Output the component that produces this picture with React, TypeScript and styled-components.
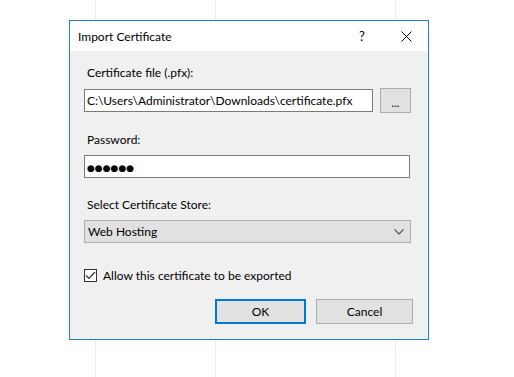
import React from "react";
import styled, { createGlobalStyle } from "styled-components";

const GlobalStyle = createGlobalStyle`
  html, body {
    margin: 0;
    padding: 0;
    background: #fff;
  }
  body {
    font-family: Lato, "Noto Sans", sans-serif;
    font-size: 12px;
    color: #000;
  }
`;

const Page = styled.div`
  width: 514px;
  height: 377px;
  box-sizing: border-box;
  padding: 20px 0 0 69px;
  background:
    linear-gradient(#e9eef5, #e9eef5) 95px 0 / 1px 100% no-repeat,
    linear-gradient(#e9eef5, #e9eef5) 215px 0 / 1px 100% no-repeat,
    linear-gradient(#e9eef5, #e9eef5) 395px 0 / 1px 100% no-repeat,
    #fff;
`;

const Dialog = styled.div`
  width: 360px;
  height: 320px;
  box-sizing: border-box;
  border: 1px solid #1c80d6;
  background: #f0f0f0;
  display: flex;
  flex-direction: column;
`;

const TitleBar = styled.div`
  height: 30px;
  background: #fff;
  display: flex;
  align-items: center;
  padding-left: 8px;
`;

const Title = styled.span`
  flex: 1;
  font-size: 12px;
  padding-top: 1px;
`;

const TitleButton = styled.span`
  width: 44px;
  height: 30px;
  display: flex;
  align-items: center;
  justify-content: center;
  font-size: 13px;
`;

const Body = styled.div`
  flex: 1;
  padding: 14px 17px 0 14px;
  display: flex;
  flex-direction: column;
`;

const Label = styled.div<{ $top?: number }>`
  margin-top: ${(p) => p.$top ?? 0}px;
  padding-left: 3px;
  height: 16px;
  line-height: 16px;
  margin-bottom: 7px;
`;

const Row = styled.div`
  display: flex;
  align-items: center;
  gap: 7px;
`;

const TextBox = styled.div<{ $width: number }>`
  width: ${(p) => p.$width}px;
  height: 23px;
  box-sizing: border-box;
  border: 1px solid #7a7a7a;
  background: #fff;
  padding: 0 2px;
  line-height: 21px;
  white-space: nowrap;
  overflow: hidden;
`;

const Dots = styled.span`
  font-family: "DejaVu Sans", sans-serif;
  font-size: 9px;
`;

const BrowseButton = styled.div`
  width: 31px;
  height: 25px;
  box-sizing: border-box;
  border: 1px solid #adadad;
  background: #e1e1e1;
  display: flex;
  align-items: center;
  justify-content: center;
  padding-top: 3px;
  font-size: 11px;
`;

const Select = styled.div`
  width: 327px;
  height: 23px;
  box-sizing: border-box;
  border: 1px solid #adadad;
  background: #e1e1e1;
  display: flex;
  align-items: center;
  justify-content: space-between;
  padding: 0 6px 0 3px;
`;

const CheckRow = styled.div`
  margin-top: 25px;
  display: flex;
  align-items: center;
  gap: 6px;
`;

const CheckBox = styled.span`
  width: 13px;
  height: 13px;
  box-sizing: border-box;
  border: 1px solid #333;
  background: #fff;
  display: flex;
  align-items: center;
  justify-content: center;
`;

const Footer = styled.div`
  margin: 16px -2px 0 0;
  display: flex;
  justify-content: flex-end;
  gap: 10px;
`;

const Button = styled.div<{ $primary?: boolean; $width: number }>`
  width: ${(p) => p.$width}px;
  height: 25px;
  box-sizing: border-box;
  border: ${(p) => (p.$primary ? "2px solid #0078d7" : "1px solid #adadad")};
  background: #e1e1e1;
  display: flex;
  align-items: center;
  justify-content: center;
`;

const App: React.FC = () => (
  <Page>
    <GlobalStyle />
    <Dialog>
      <TitleBar>
        <Title>Import Certificate</Title>
        <TitleButton>?</TitleButton>
        <TitleButton>
          <svg width="11" height="11" viewBox="0 0 11 11">
            <path d="M0.5 0.5 L10.5 10.5 M10.5 0.5 L0.5 10.5" stroke="#000" strokeWidth="1" fill="none" />
          </svg>
        </TitleButton>
      </TitleBar>
      <Body>
        <Label>Certificate file (.pfx):</Label>
        <Row>
          <TextBox $width={289}>C:\Users\Administrator\Downloads\certificate.pfx</TextBox>
          <BrowseButton>...</BrowseButton>
        </Row>
        <Label $top={19}>Password:</Label>
        <TextBox $width={326}>
          <Dots>●●●●●●</Dots>
        </TextBox>
        <Label $top={19}>Select Certificate Store:</Label>
        <Select>
          <span>Web Hosting</span>
          <svg width="10" height="6" viewBox="0 0 10 6">
            <path d="M0.5 0.5 L5 5 L9.5 0.5" stroke="#555" strokeWidth="1.2" fill="none" />
          </svg>
        </Select>
        <CheckRow>
          <CheckBox>
            <svg width="11" height="9" viewBox="0 0 11 9">
              <path d="M1 4.5 L4 7.5 L10 1" stroke="#333" strokeWidth="1.2" fill="none" />
            </svg>
          </CheckBox>
          <span>Allow this certificate to be exported</span>
        </CheckRow>
        <Footer>
          <Button $primary $width={91}>OK</Button>
          <Button $width={97}>Cancel</Button>
        </Footer>
      </Body>
    </Dialog>
  </Page>
);

export default App;
